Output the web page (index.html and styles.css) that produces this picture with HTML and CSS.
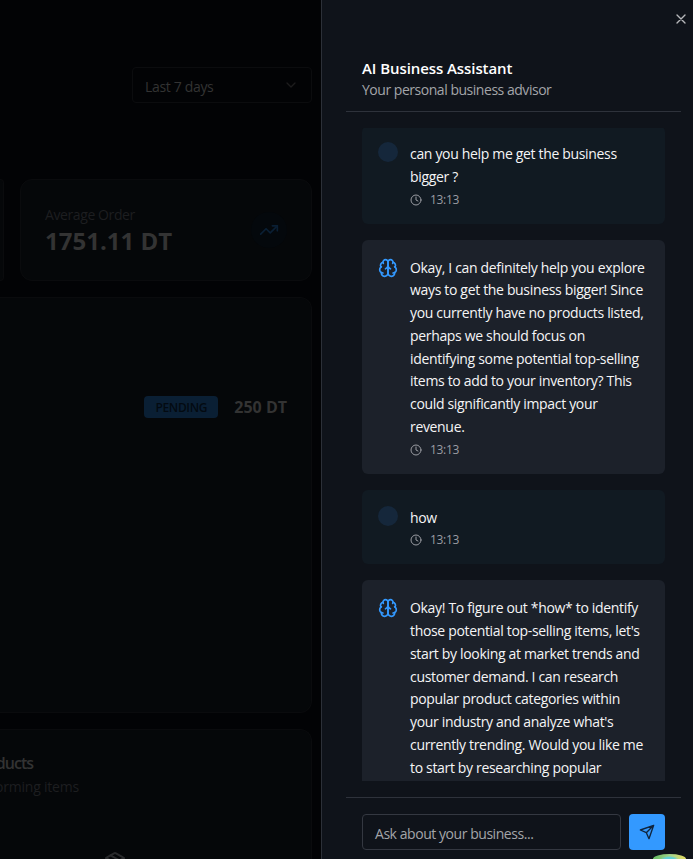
FILE: index.html
```
<!DOCTYPE html>
<html lang="en">
<head>
<meta charset="utf-8">
<title>AI Business Assistant</title>
<link rel="stylesheet" href="styles.css">
</head>
<body>
<svg width="0" height="0" class="defs">
  <symbol id="clock" viewBox="0 0 24 24"><circle cx="12" cy="12" r="10"/><path d="M12 6v6l4 2"/></symbol>
  <symbol id="brain" viewBox="0 0 24 24"><path d="M12 5a3 3 0 1 0-5.997.125 4 4 0 0 0-2.526 5.77 4 4 0 0 0 .556 6.588A4 4 0 1 0 12 18Z"/><path d="M12 5a3 3 0 1 1 5.997.125 4 4 0 0 1 2.526 5.77 4 4 0 0 1-.556 6.588A4 4 0 1 1 12 18Z"/><path d="M15 13a4.5 4.5 0 0 1-3-4 4.5 4.5 0 0 1-3 4"/><path d="M17.599 6.5a3 3 0 0 0 .399-1.375M6.003 5.125A3 3 0 0 0 6.401 6.5M3.477 10.896a4 4 0 0 1 .585-.396M19.938 10.5a4 4 0 0 1 .585.396M6 18a4 4 0 0 1-1.967-.516M19.967 17.484A4 4 0 0 1 18 18"/></symbol>
</svg>
<main class="dashboard">
  <div class="select"><span>Last 7 days</span><svg class="icon chevron" viewBox="0 0 24 24"><path d="m6 9 6 6 6-6"/></svg></div>
  <div class="stats">
    <div class="card stat-prev"></div>
    <div class="card stat">
      <div>
        <div class="stat-label">Average Order</div>
        <div class="stat-value">1751.11 DT</div>
      </div>
      <div class="trend"><svg class="icon" viewBox="0 0 24 24"><path d="M22 7 13.5 15.5 8.5 10.5 2 17"/><path d="M16 7h6v6"/></svg></div>
    </div>
  </div>
  <section class="card orders">
    <div class="order"><span class="badge">PENDING</span><span class="amount">250 DT</span></div>
  </section>
  <section class="card products">
    <h2><span>ducts</span></h2>
    <p><span>orming items</span></p>
    <svg class="icon package" viewBox="0 0 24 24"><path d="m7.5 4.27 9 5.15"/><path d="M21 8a2 2 0 0 0-1-1.73l-7-4a2 2 0 0 0-2 0l-7 4A2 2 0 0 0 3 8v8a2 2 0 0 0 1 1.73l7 4a2 2 0 0 0 2 0l7-4A2 2 0 0 0 21 16Z"/><path d="m3.3 7 8.7 5 8.7-5M12 22V12"/></svg>
  </section>
</main>
<aside class="panel">
  <svg class="icon close" viewBox="0 0 24 24"><path d="M18 6 6 18M6 6l12 12"/></svg>
  <header class="head">
    <h1>AI Business Assistant</h1>
    <p>Your personal business advisor</p>
  </header>
  <div class="chat">
    <div class="messages">
      <article class="msg user">
        <i class="avatar"></i>
        <div><p>can you help me get the business<br>bigger ?</p><time><svg class="icon"><use href="#clock"/></svg>13:13</time></div>
      </article>
      <article class="msg">
        <svg class="icon brain"><use href="#brain"/></svg>
        <div><p>Okay, I can definitely help you explore<br>ways to get the business bigger! Since<br>you currently have no products listed,<br>perhaps we should focus on<br>identifying some potential top-selling<br>items to add to your inventory? This<br>could significantly impact your<br>revenue.</p><time><svg class="icon"><use href="#clock"/></svg>13:13</time></div>
      </article>
      <article class="msg user">
        <i class="avatar"></i>
        <div><p>how</p><time><svg class="icon"><use href="#clock"/></svg>13:13</time></div>
      </article>
      <article class="msg">
        <svg class="icon brain"><use href="#brain"/></svg>
        <div><p>Okay! To figure out *how* to identify<br>those potential top-selling items, let's<br>start by looking at market trends and<br>customer demand. I can research<br>popular product categories within<br>your industry and analyze what's<br>currently trending. Would you like me<br>to start by researching popular</p></div>
      </article>
    </div>
  </div>
  <footer class="compose">
    <div class="input">Ask about your business...</div>
    <div class="send"><svg class="icon" viewBox="0 0 24 24"><path d="m22 2-7 20-4-9-9-4ZM22 2 11 13"/></svg></div>
  </footer>
</aside>
<div class="bubble"></div>
</body>
</html>
```
FILE: styles.css
```
* { box-sizing: border-box; margin: 0; }
body {
  display: flex;
  width: 693px;
  height: 859px;
  overflow: hidden;
  position: relative;
  background: #020305;
  font: 14px/20px "Open Sans", "Noto Sans", sans-serif;
  letter-spacing: -0.33px;
  white-space: nowrap;
}
.defs { position: absolute; }
.icon {
  fill: none;
  stroke: currentColor;
  stroke-width: 2;
  stroke-linecap: round;
  stroke-linejoin: round;
  flex: none;
}
.dashboard {
  width: 321px;
  flex: none;
  padding: 67px 9px 0 0;
  height: 859px;
  overflow: hidden;
  color: #333;
}
.select {
  display: flex;
  align-items: center;
  justify-content: space-between;
  width: 180px;
  height: 36px;
  margin-left: auto;
  padding: 3px 12px 0;
  border: 1px solid #0b0c0e;
  border-radius: 4px;
}
.chevron { width: 16px; height: 16px; color: #1c1c1d; margin-top: -4px; }
.card { background: #050709; border: 1px solid #0a0b0d; border-radius: 12px; }
.stats { display: flex; gap: 16px; margin-top: 76px; }
.stat-prev { width: 4px; height: 102px; border-left: 0; border-radius: 0 12px 12px 0; }
.stat {
  display: flex;
  flex: 1;
  align-items: center;
  justify-content: space-between;
  height: 102px;
  padding: 0 24px;
}
.stat-label { color: #1d1e20; margin-top: 2px; letter-spacing: -0.4px; }
.stat-value { font-size: 24px; line-height: 32px; font-weight: 700; letter-spacing: 0; }
.trend {
  display: grid;
  place-items: center;
  width: 36px;
  height: 36px;
  border-radius: 50%;
  background: #04080c;
  color: #0a1f34;
}
.trend svg { width: 20px; height: 20px; }
.orders {
  height: 416px;
  margin-top: 16px;
  padding: 97px 24px 0;
  border-left: 0;
  border-radius: 0 12px 12px 0;
}
.order { display: flex; align-items: flex-start; justify-content: flex-end; gap: 16px; }
.badge {
  width: 74px;
  height: 22px;
  margin-top: 1px;
  border-radius: 4px;
  background: #0a1f34;
  color: #030a11;
  font-size: 12px;
  font-weight: 600;
  line-height: 23px;
  text-align: center;
}
.amount { font-size: 16px; font-weight: 700; line-height: 24px; letter-spacing: 0; }
.products {
  height: 130px;
  margin-top: 16px;
  padding-top: 24px;
  border-left: 0;
  border-bottom: 0;
  border-radius: 0 12px 0 0;
  overflow: hidden;
}
.products h2, .products p { display: flex; justify-content: flex-end; }
.products h2 { width: 33px; margin-top: -1px; font-size: 16px; line-height: 20px; font-weight: 600; letter-spacing: -1px; }
.products p { width: 79px; margin-top: 4px; color: #1d1e20; letter-spacing: -0.2px; }
.package { display: block; width: 24px; height: 24px; margin: 54px 0 0 103px; color: #292a2c; }
.panel {
  position: relative;
  flex: 1;
  display: flex;
  flex-direction: column;
  border-left: 1px solid #2c3038;
  background: #0f131a;
  color: #f5f5f6;
  padding: 42px 12px 0 24px;
}
.close { position: absolute; top: 11px; right: 4px; width: 16px; height: 16px; color: #b7b8bb; }
.head { height: 70px; padding: 15px 16px 0; border-bottom: 1px solid #2e323b; }
.head h1 { font-size: 15px; line-height: 22px; font-weight: 600; letter-spacing: -0.08px; color: #fff; }
.head p { margin-top: 1px; color: #a3a5a9; line-height: 20px; letter-spacing: -0.47px; }
.chat { height: 653px; margin: 16px 16px 0; overflow: hidden; }
.messages { display: flex; flex-direction: column; gap: 16px; margin-top: -2px; }
.msg {
  display: flex;
  gap: 12px;
  padding: 16px;
  border-radius: 6px;
  background: #1c212a;
}
.msg.user { background: #111a22; }
.msg p { padding-top: 1px; line-height: 22.75px; }
.msg time {
  display: flex;
  align-items: center;
  gap: 8px;
  margin-top: 3px;
  font-size: 12px;
  line-height: 16px;
  color: #9b9da3;
}
.msg time svg { width: 12px; height: 12px; }
.avatar { width: 20px; height: 20px; flex: none; border-radius: 50%; background: #15273b; }
.brain { width: 20px; height: 20px; margin-top: 2px; color: #3399ff; }
.compose {
  display: flex;
  gap: 8px;
  margin-top: 16px;
  padding: 16px 16px 0;
  border-top: 1px solid #2e323b;
}
.input {
  flex: 1;
  height: 36px;
  padding: 1px 12px 0;
  border: 1px solid #343841;
  border-radius: 4px;
  line-height: 35px;
  letter-spacing: -0.45px;
  color: #a3a5a9;
}
.send {
  display: grid;
  place-items: center;
  width: 36px;
  height: 36px;
  border-radius: 4px;
  background: #3399ff;
  color: #10243c;
}
.send svg { width: 16px; height: 16px; }
.bubble {
  position: absolute;
  left: 653px;
  top: 854px;
  width: 33px;
  height: 5px;
  border-radius: 17px 17px 0 0 / 5px 5px 0 0;
  background: radial-gradient(ellipse 9px 3px at 50% 5px, #5fd0d8 50%, transparent), linear-gradient(90deg, #6fbf68 10%, #a9d48a 55%, #d9d968 90%);
}
```
